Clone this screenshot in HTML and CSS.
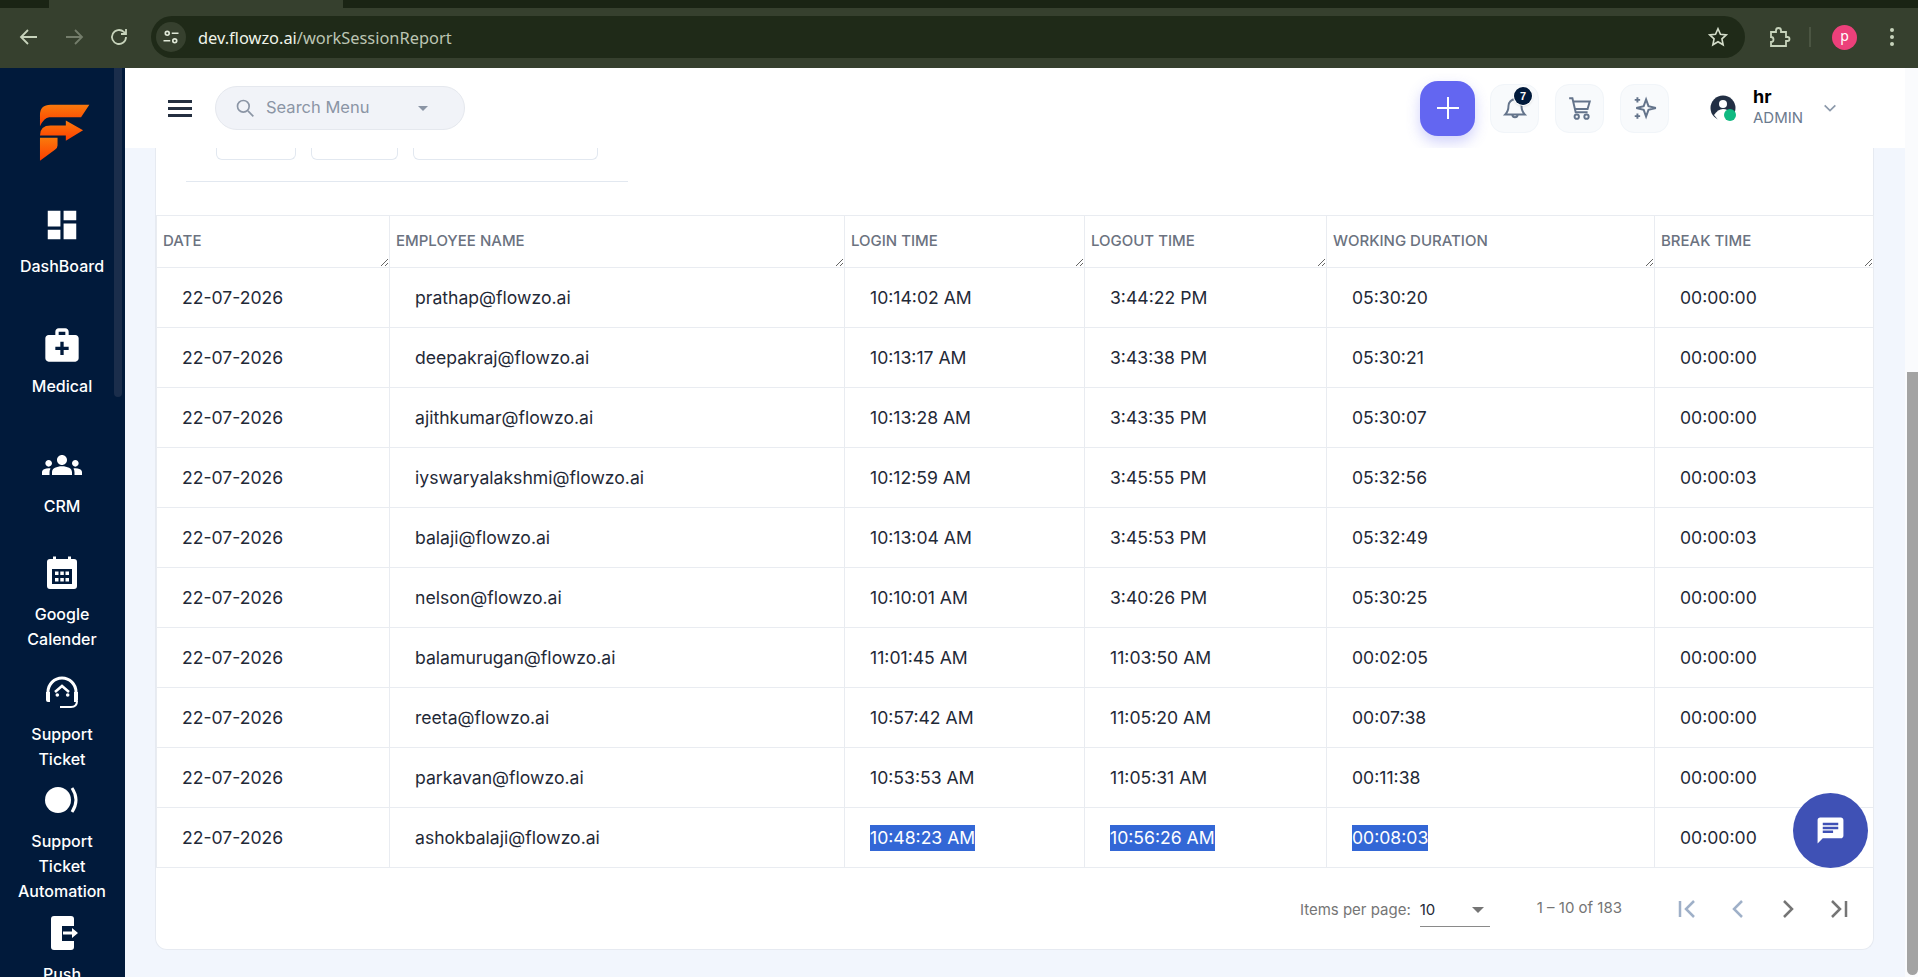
FILE: index.html
```html
<!DOCTYPE html>
<html>
<head>
    <title>Work Session Report</title>
    <link rel="stylesheet" href="styles.css">
</head>
<body>
    <!-- browser toolbar -->
    <div class="tabstrip"><div class="active-tab"></div></div>
    <div class="toolbar">
        <svg class="tb-icon" viewBox="0 0 24 24"><path d="M20 12H5M11 5l-7 7 7 7"/></svg>
        <svg class="tb-icon tb-off" viewBox="0 0 24 24"><path d="M4 12h15M13 5l7 7-7 7"/></svg>
        <svg class="tb-icon" viewBox="0 0 24 24"><path d="M19 12a7 7 0 1 1-2.2-5.1L19 9M19 4v5h-5"/></svg>
        <div class="omnibox">
            <span class="site-chip">
                <svg viewBox="0 0 24 24"><circle cx="7" cy="7" r="2.6"/><path d="M13 7h9M2 17h9"/><circle cx="17" cy="17" r="2.6"/></svg>
            </span>
            <span class="url"><b>dev.flowzo.ai</b>/workSessionReport</span>
            <svg class="star" viewBox="0 0 24 24"><path d="M12 3l2.7 6 6.3.7-4.7 4.3 1.3 6.5L12 17.2l-5.6 3.3 1.3-6.5L3 9.700l6.300-.7z"/></svg>
        </div>
        <svg class="tb-icon puzzle" viewBox="0 0 24 24"><path d="M4 7h5V5.500a2.500 2.500 0 0 1 5 0V7h5v5h1.500a2 2 0 0 1 0 4H19v5H4v-4a2.500 2.500 0 0 0 0-5z"/></svg>
        <span class="tb-sep"></span>
        <span class="profile">p</span>
        <span class="kebab"><i></i><i></i><i></i></span>
    </div>

    <div class="app">
        <aside class="sidebar">
            <div class="logo">
                <svg viewBox="58 55 152 172">
                    <defs>
                        <linearGradient id="logoGrad" x1="0" y1="0" x2="0" y2="1">
                            <stop offset="0" stop-color="#f97a0c"/>
                            <stop offset="1" stop-color="#ff3d00"/>
                        </linearGradient>
                    </defs>
                    <g fill="url(#logoGrad)">
                        <path d="M60 122V88Q60 57 92 57H209L184 95H88Q72 97 60 122Z"/>
                        <path d="M60 150Q60 120 92 120H138V105L190 134 138 166V150Z"/>
                        <path d="M60 157H113V180Q113 188 105 193L60 226Z"/>
                    </g>
                </svg>
            </div>
            <nav class="nav">
                <a class="nav-item">
                    <span class="nav-icon"><svg class="s38" viewBox="0 0 24 24"><path d="M3 13h8V3H3v10zm0 8h8v-6H3v6zm10 0h8V11h-8v10zm0-18v6h8V3h-8z"/></svg></span>
                    <span>DashBoard</span>
                </a>
                <a class="nav-item">
                    <span class="nav-icon"><svg class="s40" viewBox="0 0 24 24"><path d="M20 6h-4V4c0-1.100-.9-2-2-2h-4c-1.100 0-2 .9-2 2v2H4c-1.100 0-2 .9-2 2v12c0 1.100.9 2 2 2h16c1.100 0 2-.9 2-2V8c0-1.100-.9-2-2-2zM10 4h4v2h-4V4zm6 11h-3v3h-2v-3H8v-2h3v-3h2v3h3v2z"/></svg></span>
                    <span>Medical</span>
                </a>
                <a class="nav-item">
                    <span class="nav-icon"><svg class="s40" viewBox="0 0 24 24"><path d="M12 12.750c1.630 0 3.070.39 4.240.9 1.080.48 1.760 1.560 1.760 2.730V18H6v-1.610c0-1.180.68-2.260 1.760-2.730 1.170-.52 2.610-.91 4.240-.91zM4 13c1.100 0 2-.9 2-2s-.9-2-2-2-2 .9-2 2 .9 2 2 2zm1.130 1.100C4.760 14.040 4.390 14 4 14c-.99 0-1.930.21-2.780.58C.48 14.900 0 15.620 0 16.430V18h4.500v-1.610c0-.83.23-1.610.63-2.290zM20 13c1.100 0 2-.9 2-2s-.9-2-2-2-2 .9-2 2 .9 2 2 2zm4 3.430c0-.81-.48-1.530-1.220-1.850-.85-.37-1.790-.58-2.780-.58-.39 0-.76.04-1.130.1.4.68.63 1.460.63 2.290V18H24v-1.570zM12 6c1.660 0 3 1.340 3 3s-1.340 3-3 3-3-1.340-3-3 1.340-3 3-3z"/></svg></span>
                    <span>CRM</span>
                </a>
                <a class="nav-item">
                    <span class="nav-icon"><svg class="s40" viewBox="0 0 40 40">
                        <path d="M8 6h3V3.500h3V6h12V3.500h3V6h3q3 0 3 3v24q0 3-3 3H8q-3 0-3-3V9q0-3 3-3z"/>
                        <path class="cut" d="M10 16h20v15H10z"/>
                        <path d="M13 18.500h3.500V22H13zM18.300 18.500h3.500V22h-3.500zM23.500 18.500H27V22h-3.500zM13 25h3.500v3.500H13zM18.300 25h3.500v3.500h-3.500zM23.500 25H27v3.500h-3.500z"/>
                    </svg></span>
                    <span>Google<br>Calender</span>
                </a>
                <a class="nav-item">
                    <span class="nav-icon"><svg class="s40" viewBox="0 0 40 40">
                        <path class="ln" d="M6 22v-3a14 14 0 0 1 28 0v3"/>
                        <path d="M4 19h4v10H6q-2 0-2-2zM32 19h4v8q0 2-2 2h-2z"/>
                        <path class="ln mid" d="M13 19l7-6 7 6"/>
                        <circle cx="15.300" cy="22" r="1.800"/><circle cx="25.700" cy="22" r="1.800"/>
                        <path class="ln thin" d="M35 28q0 6-6 6H18"/>
                    </svg></span>
                    <span>Support<br>Ticket</span>
                </a>
                <a class="nav-item">
                    <span class="nav-icon"><svg class="s40" viewBox="0 0 40 40">
                        <circle cx="16" cy="20" r="13"/>
                        <path class="ln" d="M30 8q8 12 0 24"/>
                    </svg></span>
                    <span>Support<br>Ticket<br>Automation</span>
                </a>
                <a class="nav-item nav-push">
                    <span class="nav-icon"><svg class="s40" viewBox="0 0 40 40">
                        <path d="M12 3h17q3 0 3 3v28q0 3-3 3H12q-3 0-3-3V6q0-3 3-3z"/>
                        <path class="cut" d="M20 13h13v15H20z"/>
                        <path d="M21 18.500h9V15l6 5-6 5v-3.500h-9z"/>
                    </svg></span>
                    <span>Push</span>
                </a>
            </nav>
            <div class="side-thumb"></div>
        </aside>

        <main class="main">
            <header class="topbar">
                <div class="burger"><i></i><i></i><i></i></div>
                <div class="search">
                    <svg class="search-ico" viewBox="0 0 24 24"><circle cx="10" cy="10" r="7"/><path d="M15.500 15.500L22 22"/></svg>
                    <span class="search-text">Search Menu</span>
                    <span class="caret"></span>
                </div>
                <div class="top-actions">
                    <button class="add-btn"><svg viewBox="0 0 24 24"><path d="M12 1v22M1 12h22"/></svg></button>
                    <button class="icon-btn">
                        <svg viewBox="0 0 24 24"><path d="M6 10a6 6 0 0 1 12 0c0 4 1 6 3 8H3c2-2 3-4 3-8zM9.500 18a2.500 2.500 0 0 0 5 0"/></svg>
                        <span class="badge">7</span>
                    </button>
                    <button class="icon-btn"><svg viewBox="0 0 24 24"><path d="M2 3h3l3 13h11M6 6h15l-2 7H7.500"/><circle cx="9" cy="20" r="2"/><circle cx="18" cy="20" r="2"/></svg></button>
                    <button class="icon-btn"><svg viewBox="0 0 24 24"><path d="M13 4l2.200 6.300L22 12l-6.800 1.700L13 20l-2.200-6.300L4 12l6.800-1.700zM5 2v5M2.500 4.500h5M5 17v5M2.500 19.500h5"/></svg></button>
                    <div class="user">
                        <svg class="avatar" viewBox="0 0 26 26">
                            <circle cx="13" cy="13" r="12.500" fill="#222f44"/>
                            <circle cx="13" cy="9" r="4" fill="#fff"/>
                            <path d="M4 20q4-6 9-6t8 5l-3 7H9z" fill="#fff"/>
                            <circle cx="20" cy="20" r="6" fill="#10b981"/>
                        </svg>
                        <div class="user-text">
                            <div class="user-name">hr</div>
                            <div class="user-role">ADMIN</div>
                        </div>
                        <svg class="chev" viewBox="0 0 24 24"><path d="M4 8l8 8 8-8"/></svg>
                    </div>
                </div>
            </header>

            <div class="content">
                <section class="card">
                    <div class="filter-row">
                        <span class="filter-box w80"></span>
                        <span class="filter-box w87"></span>
                        <span class="filter-box w185"></span>
                    </div>
                    <div class="filter-line"></div>
                    <table class="report">
                        <colgroup>
                            <col class="c1"><col class="c2"><col class="c3"><col class="c4"><col class="c5"><col class="c6">
                        </colgroup>
                        <thead>
                            <tr>
                                <th><div class="th-in">Date</div></th>
                                <th><div class="th-in">Employee Name</div></th>
                                <th><div class="th-in">Login Time</div></th>
                                <th><div class="th-in">Logout Time</div></th>
                                <th><div class="th-in">Working Duration</div></th>
                                <th><div class="th-in">Break Time</div></th>
                            </tr>
                        </thead>
                        <tbody>
                            <tr><td>22-07-2026</td><td>prathap@flowzo.ai</td><td>10:14:02 AM</td><td>3:44:22 PM</td><td>05:30:20</td><td>00:00:00</td></tr>
                            <tr><td>22-07-2026</td><td>deepakraj@flowzo.ai</td><td>10:13:17 AM</td><td>3:43:38 PM</td><td>05:30:21</td><td>00:00:00</td></tr>
                            <tr><td>22-07-2026</td><td>ajithkumar@flowzo.ai</td><td>10:13:28 AM</td><td>3:43:35 PM</td><td>05:30:07</td><td>00:00:00</td></tr>
                            <tr><td>22-07-2026</td><td>iyswaryalakshmi@flowzo.ai</td><td>10:12:59 AM</td><td>3:45:55 PM</td><td>05:32:56</td><td>00:00:03</td></tr>
                            <tr><td>22-07-2026</td><td>balaji@flowzo.ai</td><td>10:13:04 AM</td><td>3:45:53 PM</td><td>05:32:49</td><td>00:00:03</td></tr>
                            <tr><td>22-07-2026</td><td>nelson@flowzo.ai</td><td>10:10:01 AM</td><td>3:40:26 PM</td><td>05:30:25</td><td>00:00:00</td></tr>
                            <tr><td>22-07-2026</td><td>balamurugan@flowzo.ai</td><td>11:01:45 AM</td><td>11:03:50 AM</td><td>00:02:05</td><td>00:00:00</td></tr>
                            <tr><td>22-07-2026</td><td>reeta@flowzo.ai</td><td>10:57:42 AM</td><td>11:05:20 AM</td><td>00:07:38</td><td>00:00:00</td></tr>
                            <tr><td>22-07-2026</td><td>parkavan@flowzo.ai</td><td>10:53:53 AM</td><td>11:05:31 AM</td><td>00:11:38</td><td>00:00:00</td></tr>
                            <tr><td>22-07-2026</td><td>ashokbalaji@flowzo.ai</td><td><span class="sel">10:48:23 AM</span></td><td><span class="sel">10:56:26 AM</span></td><td><span class="sel">00:08:03</span></td><td>00:00:00</td></tr>
                        </tbody>
                    </table>
                    <div class="pager">
                        <span class="pager-label">Items per page:</span>
                        <div class="pager-select"><span>10</span><i class="pager-caret"></i></div>
                        <span class="pager-range">1 – 10 of 183</span>
                        <div class="pager-btns">
                            <svg class="off" viewBox="0 0 24 24"><path d="M4 4v16M18 4l-8 8 8 8"/></svg>
                            <svg class="off" viewBox="0 0 24 24"><path d="M16 4l-8 8 8 8"/></svg>
                            <svg viewBox="0 0 24 24"><path d="M8 4l8 8-8 8"/></svg>
                            <svg viewBox="0 0 24 24"><path d="M6 4l8 8-8 8M20 4v16"/></svg>
                        </div>
                    </div>
                </section>
            </div>
        </main>

        <div class="page-scroll"><div class="page-thumb"></div></div>
    </div>

    <button class="chat-fab">
        <svg viewBox="0 0 24 24"><path d="M20 2H4c-1.100 0-1.990.9-1.990 2L2 22l4-4h14c1.100 0 2-.9 2-2V4c0-1.100-.9-2-2-2zM6 9h12v2H6V9zm8 5H6v-2h8v2zm4-6H6V6h12v2z"/></svg>
    </button>
</body>
</html>
```

FILE: styles.css
```css
* {
    box-sizing: border-box;
}

body {
    margin: 0;
    height: 977px;
    overflow: hidden;
    background-color: #f2f6fd;
    font-family: Inter, "Noto Sans", sans-serif;
}

/* browser chrome */
.tabstrip {
    height: 8px;
    background-color: #1a2414;
}

.active-tab {
    width: 294px;
    height: 8px;
    margin-left: 49px;
    background-color: #36402e;
}

.toolbar {
    display: flex;
    align-items: center;
    height: 60px;
    padding: 0 0 2px 17px;
    background-color: #36402e;
}

.tb-icon {
    width: 24px;
    height: 24px;
    margin-right: 21px;
    fill: none;
    stroke: #c7d3bb;
    stroke-width: 1.8;
}

.tb-off {
    stroke: #747d6b;
}

.omnibox {
    display: flex;
    align-items: center;
    width: 1594px;
    height: 42px;
    margin-left: -1px;
    padding: 0 16px 0 5px;
    background-color: #1f2a18;
    border-radius: 21px;
}

.site-chip {
    display: flex;
    align-items: center;
    justify-content: center;
    width: 30px;
    height: 30px;
    margin-right: 12px;
    background-color: #36402e;
    border-radius: 50%;
}

.site-chip svg {
    width: 18px;
    height: 18px;
    fill: none;
    stroke: #e0e8d8;
    stroke-width: 2.2;
}

.url {
    flex: 1;
    color: #bcc5b3;
    font-family: "Noto Sans", sans-serif;
    font-size: 16.4px;
}

.url b {
    color: #eef3e8;
    font-weight: 400;
}

.star {
    width: 22px;
    height: 22px;
    fill: none;
    stroke: #d3dcc9;
    stroke-width: 1.8;
}

.puzzle {
    margin-left: 22px;
    margin-right: 18px;
}

.tb-sep {
    width: 2px;
    height: 20px;
    margin-right: 21px;
    background-color: #4b5542;
}

.profile {
    display: flex;
    align-items: center;
    justify-content: center;
    width: 25px;
    height: 25px;
    margin-right: 33px;
    padding-bottom: 3px;
    background-color: #ec407a;
    border-radius: 50%;
    color: #fff;
    font-family: "Noto Sans", sans-serif;
    font-size: 14px;
}

.kebab {
    display: flex;
    flex-direction: column;
    gap: 3px;
}

.kebab i {
    display: block;
    width: 4px;
    height: 4px;
    background-color: #c7d3bb;
    border-radius: 50%;
}

/* app shell */
.app {
    display: flex;
    height: 909px;
}

.sidebar {
    position: relative;
    flex-shrink: 0;
    width: 125px;
    overflow: hidden;
    background-color: #011a3b;
}

.side-thumb {
    position: absolute;
    top: 0;
    left: 114px;
    width: 8px;
    height: 329px;
    background-color: #1a2d4b;
    border-radius: 0 0 4px 4px;
}

.logo {
    height: 115px;
    padding: 36px 0 0 39px;
}

.logo svg {
    display: block;
    width: 51px;
    height: 57px;
}

.nav-item {
    display: flex;
    flex-direction: column;
    align-items: center;
    justify-content: center;
    height: 120px;
    padding-right: 1px;
    color: #fff;
    font-size: 16px;
    font-weight: 500;
    line-height: 25px;
    text-align: center;
}

.nav-push {
    padding-bottom: 25px;
}

.nav-icon {
    display: flex;
    flex-shrink: 0;
    align-items: center;
    justify-content: center;
    height: 36px;
    margin-bottom: 11px;
}

.nav-icon svg {
    fill: #fff;
}

.nav-icon .cut {
    fill: #011a3b;
}

.nav-icon .ln {
    fill: none;
    stroke: #fff;
    stroke-width: 3;
}

.nav-icon .ln.mid {
    stroke-width: 2.5;
}

.nav-icon .ln.thin {
    stroke-width: 2;
}

.s38 {
    width: 38px;
    height: 38px;
}

.s40 {
    width: 40px;
    height: 40px;
}

.main {
    display: flex;
    flex: 1;
    flex-direction: column;
    min-width: 0;
}

.topbar {
    display: flex;
    flex-shrink: 0;
    align-items: center;
    height: 80px;
    padding-left: 43px;
    background-color: #fff;
}

.burger {
    display: flex;
    flex-direction: column;
    gap: 4px;
    margin-right: 23px;
}

.burger i {
    display: block;
    width: 24px;
    height: 3px;
    background-color: #242f40;
}

.search {
    display: flex;
    align-items: center;
    width: 250px;
    height: 44px;
    padding-left: 19px;
    background-color: #f1f3f8;
    border: 1px solid #e5e8ee;
    border-radius: 22px;
}

.search-ico {
    width: 20px;
    height: 20px;
    margin-right: 11px;
    fill: none;
    stroke: #8b95a5;
    stroke-width: 2;
}

.search-text {
    margin-top: -2px;
    color: #8b95a5;
    font-size: 16.5px;
}

.caret {
    width: 0;
    height: 0;
    margin-left: 49px;
    border-top: 5px solid #8b95a5;
    border-left: 5px solid transparent;
    border-right: 5px solid transparent;
}

.top-actions {
    display: flex;
    align-items: center;
    margin-left: auto;
}

.add-btn {
    display: flex;
    align-items: center;
    justify-content: center;
    width: 55px;
    height: 55px;
    margin-right: 15px;
    padding: 0;
    background-color: #6366f1;
    border: none;
    border-radius: 18px;
    box-shadow: 0 6px 14px rgba(99, 102, 241, 0.3);
}

.add-btn svg {
    width: 24px;
    height: 24px;
    fill: none;
    stroke: #fff;
    stroke-width: 2;
}

.icon-btn {
    position: relative;
    display: flex;
    align-items: center;
    justify-content: center;
    width: 49px;
    height: 49px;
    margin-right: 16px;
    padding: 0;
    background-color: #f8fafc;
    border: 1px solid #f1f5f9;
    border-radius: 14px;
}

.icon-btn svg {
    width: 26px;
    height: 26px;
    fill: none;
    stroke: #64748b;
    stroke-width: 1.800;
}

.badge {
    position: absolute;
    top: 2px;
    right: 6px;
    width: 18px;
    height: 18px;
    background-color: #011a3b;
    border-radius: 50%;
    box-shadow: 0 0 0 1px #fff, 0 1px 3px rgba(0, 0, 0, 0.2);
    color: #fff;
    font-size: 11px;
    font-weight: 700;
    line-height: 18px;
    text-align: center;
}

.user {
    display: flex;
    align-items: center;
    width: 220px;
    padding-left: 25px;
}

.avatar {
    width: 26px;
    height: 26px;
    margin-right: 17px;
}

.user-name {
    margin-top: -2px;
    color: #000;
    font-size: 18px;
    font-weight: 700;
    line-height: 22px;
}

.user-role {
    color: #6b7a8e;
    font-size: 15px;
    line-height: 20px;
}

.chev {
    width: 16px;
    height: 16px;
    margin-left: 19px;
    fill: none;
    stroke: #8c99ab;
    stroke-width: 2.500;
}

.content {
    flex: 1;
    padding: 0 31px 0 30px;
    overflow: hidden;
}

.card {
    height: 802px;
    background-color: #fff;
    border: 1px solid #e6eaf1;
    border-top: none;
    border-radius: 0 0 12px 12px;
}

.filter-row {
    display: flex;
    gap: 15px;
    margin-left: 60px;
}

.filter-box {
    height: 12px;
    background-color: #fff;
    border: 1px solid #e2e8f0;
    border-top: none;
    border-radius: 0 0 6px 6px;
}

.w80 { width: 80px; }
.w87 { width: 87px; }
.w185 { width: 185px; }

.filter-line {
    width: 442px;
    height: 1px;
    margin: 21px 0 33px 30px;
    background-color: #e2e8f0;
}

.report {
    width: 1717px;
    border-collapse: collapse;
    table-layout: fixed;
}

.c1 { width: 233px; }
.c2 { width: 455px; }
.c3 { width: 240px; }
.c4 { width: 242px; }
.c5 { width: 328px; }
.c6 { width: 219px; }

.report th,
.report td {
    border: 1px solid #e9ecf1;
}

.report th {
    height: 52px;
    padding: 0;
    color: #6b7280;
    font-size: 15px;
    font-weight: 500;
    text-align: left;
    text-transform: uppercase;
}

/* the native handle gives the little corner marks */
.th-in {
    height: 51px;
    padding-left: 6px;
    overflow: hidden;
    line-height: 50px;
    resize: horizontal;
}

.report td {
    height: 60px;
    padding: 0 0 0 25px;
    color: #1f2937;
    font-size: 17.6px;
}

.sel {
    display: inline-block;
    background-color: #3367d6;
    color: #fff;
    line-height: 26px;
}

.pager {
    display: flex;
    align-items: center;
    justify-content: flex-end;
    height: 82px;
    padding: 0 10px 0 0;
    color: #757575;
    font-size: 15px;
}

.pager-label {
    margin-right: 9px;
}

.pager-select {
    display: flex;
    align-items: center;
    justify-content: space-between;
    width: 70px;
    height: 34px;
    margin-top: 2px;
    padding: 0 6px 0 0;
    border-bottom: 1px solid #8a8a8a;
    color: #1f2937;
}

.pager-caret {
    width: 0;
    height: 0;
    border-top: 6px solid #757575;
    border-left: 6px solid transparent;
    border-right: 6px solid transparent;
}

.pager-range {
    margin: 0 41px 0 47px;
    padding-bottom: 4px;
}

.pager-btns {
    display: flex;
}

.pager-btns svg {
    width: 50px;
    height: 24px;
    fill: none;
    stroke: #757575;
    stroke-width: 2.500;
}

.pager-btns svg.off {
    stroke: #9fb0c8;
}

.page-scroll {
    flex-shrink: 0;
    width: 13px;
    padding: 304px 0 0 2px;
    background-color: #fafbfd;
}

.page-thumb {
    width: 11px;
    height: 603px;
    background-color: #a3a3a3;
    border-radius: 0 0 6px 6px;
}

.chat-fab {
    position: fixed;
    top: 793px;
    left: 1793px;
    display: flex;
    align-items: center;
    justify-content: center;
    width: 75px;
    height: 75px;
    padding: 0;
    background-color: #3f51b5;
    border: none;
    border-radius: 50%;
}

.chat-fab svg {
    width: 31px;
    height: 31px;
    fill: #fff;
}
```
